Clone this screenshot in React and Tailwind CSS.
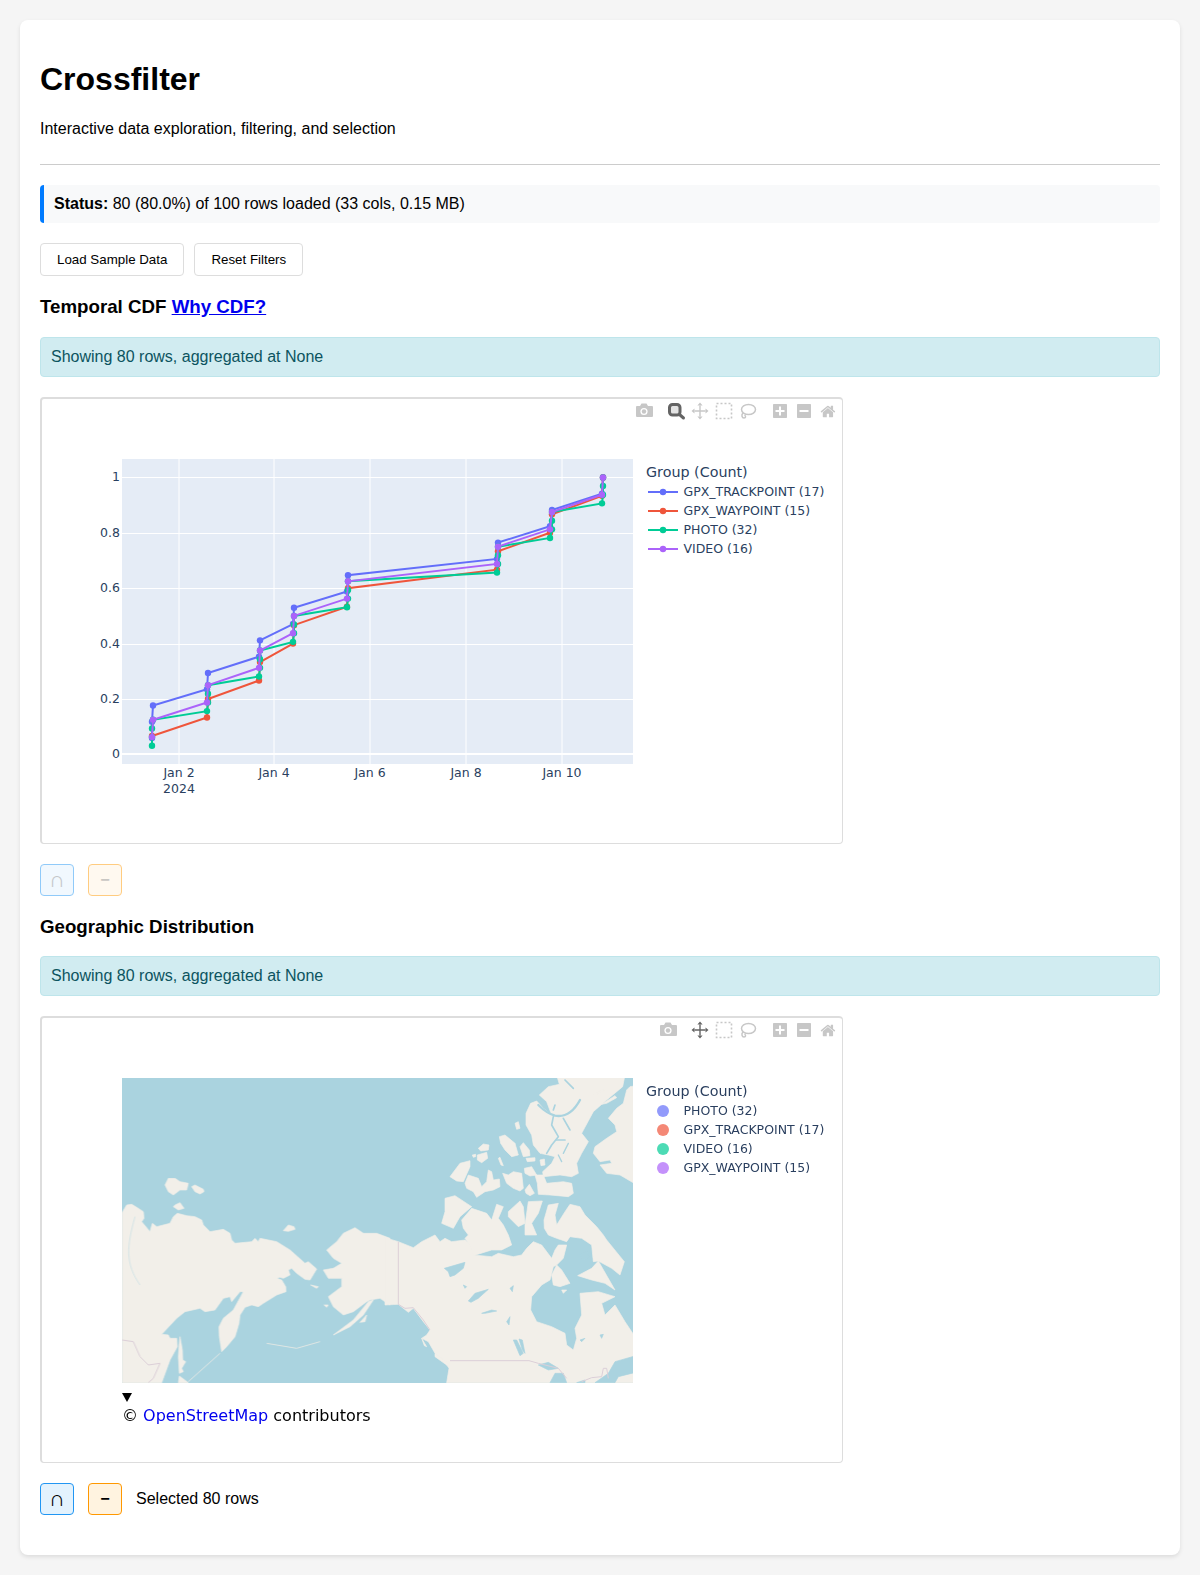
import React from 'react';

// x position of each burst of points, low end and high end of the jump
const BURSTS = [[152, 153], [207, 208], [259, 260], [293, 294], [347, 348], [497, 498], [550, 552], [602, 603]];
const yOf = (v) => 754.4 - 277 * v;

// [total rows, rows at the low end of the burst, rows at the high end]
function cdf(total, groups) {
  const pts = [];
  let k = 0;
  groups.forEach(([a, b], i) => {
    for (let n = 0; n < a; n++) { k++; pts.push([BURSTS[i][0], yOf(k / total)]); }
    for (let n = 0; n < b; n++) { k++; pts.push([BURSTS[i][1], yOf(k / total)]); }
  });
  return pts;
}

const SERIES = [
  { name: 'GPX_TRACKPOINT (17)', color: '#636efa', pts: cdf(17, [[2, 1], [1, 1], [1, 1], [1, 1], [1, 1], [1, 1], [1, 1], [1, 1]]) },
  { name: 'GPX_WAYPOINT (15)', color: '#ef553b', pts: cdf(15, [[1, 0], [1, 1], [1, 1], [1, 1], [1, 1], [1, 1], [1, 1], [1, 1]]) },
  { name: 'PHOTO (32)', color: '#00cc96', pts: cdf(32, [[3, 1], [1, 3], [1, 3], [1, 3], [1, 3], [1, 3], [1, 3], [1, 3]]) },
  { name: 'VIDEO (16)', color: '#ab63fa', pts: cdf(16, [[1, 1], [1, 1], [1, 1], [1, 1], [1, 1], [1, 1], [1, 1], [1, 1]]) },
];

const GEO_LEGEND = [
  ['PHOTO (32)', '#929afb'],
  ['GPX_TRACKPOINT (17)', '#f48876'],
  ['VIDEO (16)', '#4ddbb5'],
  ['GPX_WAYPOINT (15)', '#c491fb'],
];

const PLOT_FONT = { fontFamily: '"DejaVu Sans", sans-serif' };
const TICK = '#2a3f5f';
const LAND = '#f2efe9';
const WATER = '#aad3df';

function Modebar({ active, cameraX }) {
  const off = '#c7c7c7';
  const on = '#646464';
  return (
    <g>
      <g transform={`translate(${cameraX},0)`}>
        <path d="M-8 -5h4l1.5-2.5h5l1.5 2.5h4a1 1 0 0 1 1 1v9a1 1 0 0 1-1 1h-15a1 1 0 0 1-1-1v-9a1 1 0 0 1 1-1z" fill={off} />
        <circle cx="0" cy="0.5" r="3.6" fill="#fff" />
        <circle cx="0" cy="0.5" r="2.2" fill={off} />
      </g>
      {active === 'zoom' && (
        <g transform="translate(676,0)">
          <rect x="-6.5" y="-6.5" width="10.5" height="10.5" rx="3" fill="#e4e4e4" stroke={on} strokeWidth="3" />
          <path d="M3.5 3.5l4 3.5" stroke={on} strokeWidth="3" strokeLinecap="round" />
        </g>
      )}
      <g transform="translate(700,0)" fill={active === 'pan' ? on : off}>
        <path d="M-0.7 -5.5h1.4v11h-1.4zM-5.5 -0.7h11v1.4h-11z" />
        <path d="M0 -8.5l2.6 3h-5.2zM0 8.5l2.6-3h-5.2zM-8.5 0l3-2.6v5.2zM8.5 0l-3-2.6v5.2z" />
      </g>
      <rect x="716.5" y="-7.5" width="15" height="15" fill="none" stroke={off} strokeWidth="1.6" strokeDasharray="2 2" />
      <g transform="translate(748,0)" fill="none" stroke={off} strokeWidth="1.5">
        <ellipse cx="0.5" cy="-1.5" rx="7" ry="5" />
        <path d="M-5 2c-2 2 -1 5 1 5s2-2 0.5-3" />
      </g>
      <g transform="translate(780,0)">
        <rect x="-7" y="-7" width="14" height="14" rx="0.8" fill={off} />
        <path d="M-4.5 -1h3.5v-3.5h2v3.5h3.5v2h-3.5v3.5h-2v-3.5h-3.5z" fill="#fff" />
      </g>
      <g transform="translate(804,0)">
        <rect x="-7" y="-7" width="14" height="14" rx="0.8" fill={off} />
        <rect x="-4.5" y="-1" width="9" height="2" fill="#fff" />
      </g>
      <path
        transform="translate(820.5,-7.5) scale(0.016,-0.016) translate(0,-850)"
        d="m786 296v-267q0-15-11-26t-25-10h-214v214h-143v-214h-214q-15 0-25 10t-11 26v267q0 1 0 2t0 2l321 264 321-264q1-1 1-4z m124 39l-34-41q-5-5-12-6h-2q-7 0-12 3l-386 322-386-322q-7-4-13-4-7 2-12 7l-35 41q-4 5-3 13t6 12l401 334q18 15 42 15t43-15l136-114v109q0 8 5 13t13 5h107q8 0 13-5t5-13v-227l122-102q5-5 6-12t-4-13z"
        fill={off}
      />
    </g>
  );
}

function CdfChart() {
  const yTicks = [[1, '1'], [0.8, '0.8'], [0.6, '0.6'], [0.4, '0.4'], [0.2, '0.2']];
  const xTicks = [[179, 'Jan 2'], [274, 'Jan 4'], [370, 'Jan 6'], [466, 'Jan 8'], [562, 'Jan 10']];
  return (
    <svg width="800" height="444" viewBox="42 399 800 444" className="block" style={PLOT_FONT}>
      <g transform="translate(0,411)">
        <Modebar active="zoom" cameraX={644} />
      </g>
      <rect x="122" y="459" width="511" height="305" fill="#e5ecf6" />
      {xTicks.map(([x]) => <line key={x} x1={x} x2={x} y1="459" y2="764" stroke="#fff" />)}
      {yTicks.map(([v]) => <line key={v} x1="122" x2="633" y1={Math.round(yOf(v)) + 0.5} y2={Math.round(yOf(v)) + 0.5} stroke="#fff" />)}
      <line x1="122" x2="633" y1="754" y2="754" stroke="#fff" strokeWidth="2" />
      {SERIES.map((s) => (
        <g key={s.name}>
          <polyline points={s.pts.map((p) => p.join(',')).join(' ')} fill="none" stroke={s.color} strokeWidth="2" />
          {s.pts.map((p, i) => <circle key={i} cx={p[0]} cy={p[1]} r="3.2" fill={s.color} />)}
        </g>
      ))}
      {yTicks.map(([v, t]) => <text key={t} x="120" y={yOf(v) + 4} textAnchor="end" fontSize="12.5" fill={TICK}>{t}</text>)}
      <text x="120" y="758" textAnchor="end" fontSize="12.5" fill={TICK}>0</text>
      {xTicks.map(([x, t]) => <text key={t} x={x} y="777" textAnchor="middle" fontSize="12.5" fill={TICK}>{t}</text>)}
      <text x="179" y="793" textAnchor="middle" fontSize="12.5" fill={TICK}>2024</text>
      <text x="646" y="477" fontSize="14.3" fill={TICK}>Group (Count)</text>
      {SERIES.map((s, i) => (
        <g key={s.name} transform={`translate(0,${492 + i * 19})`}>
          <line x1="648" x2="678" stroke={s.color} strokeWidth="2" />
          <circle cx="663" r="3.2" fill={s.color} />
          <text x="683.5" y="4" fontSize="12.5" fill={TICK}>{s.name}</text>
        </g>
      ))}
    </svg>
  );
}

// basemap outlines, traced at 3x from three parts of the map
const SIBERIA_ALASKA = [
  '6,428 20,405 35,403 50,412 70,425 72,445 65,455 90,485 97,460 110,470 150,460 160,440 172,430 200,437 225,440 245,450 250,465 270,485 310,478 330,490 335,510 345,520 395,515 405,505 415,515 420,505 470,515 510,540 555,580 565,575 590,597 570,630 555,628 530,610 515,595 505,600 510,615 490,625 480,622 470,625 485,630 497,650 498,665 470,675 430,700 415,710 395,705 375,712 360,735 357,760 345,800 320,830 305,845 298,800 297,770 310,745 340,720 370,665 360,665 335,695 330,680 310,685 285,720 255,725 240,715 195,725 170,745 125,793 145,795 150,805 170,805 172,830 150,870 125,938 6,938',
  '180,800 187,840 188,870 197,875 185,895 190,905 178,910 175,860 178,820',
  '175,938 178,918 205,938',
  '490,482 505,465 522,470 525,478 505,484',
  '135,345 145,325 165,325 180,335 205,340 200,360 180,360 160,375 145,365',
  '215,350 225,345 250,358 252,365 240,372 225,365',
  '165,405 180,398 192,415 175,420 160,410',
  '810,505 770,490 730,490 705,473 670,490 650,515 620,540 640,565 665,580 640,595 610,600 625,625 665,625 665,650 625,680 640,710 670,735 700,725 740,695 750,690 780,685 810,705',
  '745,695 760,690 730,735 690,770 640,795 700,750',
  '720,757 740,735 735,755',
  '572,645 595,650 590,655',
  '612,705 625,705 620,712',
];

const ARCTIC = [
  '350,0 555,0 548,35 500,75 460,110 425,175 445,200 425,235 410,265 415,295 395,305 360,300 310,305 308,290 335,265 345,245 325,240 300,235 280,210 275,180 258,150 258,115 272,85 290,78 310,100 335,120 320,80 298,60 325,35 358,28',
  '600,30 570,35 560,45 550,85 530,100 505,130 525,150 530,170 500,190 465,215 460,235 480,260 510,255 515,265 480,270 500,295 540,300 600,335',
  '460,58 490,42 492,47 465,60',
  '485,88 525,62 530,68 500,85',
  '225,145 235,140 240,160 230,163',
  '178,185 195,180 225,205 235,240 215,245 195,225 182,205',
  '240,215 250,203 268,225 270,242 250,245',
  '115,220 130,207 147,210 145,225 122,228',
  '97,240 107,238 107,245 100,247',
  '112,240 140,232 143,250 125,263 112,255',
  '175,250 180,247 190,272 183,270',
  '258,250 285,248 285,258 262,260',
  '300,255 313,252 315,270 303,272',
  '30,305 60,265 90,257 90,275 70,320 50,318',
  '75,325 85,300 115,310 125,335 140,320 145,285 155,290 160,315 178,312 180,335 160,345 135,350 110,367 100,350 80,340',
  '188,295 205,300 220,290 245,295 250,340 240,348 220,340 200,325',
  '253,280 275,275 290,300 270,303 255,295',
  '255,345 268,328 283,355 270,362 258,355',
  '285,300 310,300 320,325 370,320 395,325 400,355 385,365 330,360 295,358 292,325',
  '15,370 45,362 95,395 60,425 40,460 5,445 15,410',
  '205,410 240,378 250,395 255,445 235,455 205,425',
  '265,380 307,378 295,415 275,445 290,480 255,480 255,450',
];

const CANADA = [
  '0,38 40,50 85,68 110,50 150,30 165,50 180,40 200,50 240,45 270,70 265,90 320,95 340,85 385,95 410,90 425,70 445,50 470,60 500,100 510,75 520,60 545,60 535,100 515,120 505,125 495,165 470,180 440,215 437,255 455,290 500,305 540,325 545,360 565,375 575,340 570,310 590,270 585,205 640,200 690,215 650,235 660,270 690,240 720,290 760,350 760,473 185,473 192,430 175,405 150,385 130,350 110,340 125,330 135,315 115,290 85,250 70,262 40,238 0,240',
  '230,-15 260,-50 305,-35 320,-15 335,-62 355,-55 340,-20 355,0 370,30 380,60 350,75 320,75 265,92 260,70 240,40 250,30 235,10',
  '477,-15 490,-60 520,-65 510,-30 515,0 540,-40 555,-62 585,-55 600,-30 635,5 655,30 665,45 718,110 705,150 680,130 640,108 625,110 620,60 590,40 555,35 545,50 515,40 490,30 478,10',
  '578,152 620,130 640,108 690,195 660,175 620,165',
  '500,150 515,120 530,135 555,175 525,185 505,180',
  '530,195 545,195 535,205',
  '150,385 190,415 185,420 150,395',
  '110,340 125,365 118,362',
];

const CANADA_WATER = [
  '585,90 605,80 612,95 595,105',
  '178,130 240,112 235,130 210,150 195,155 190,140',
  '250,228 270,205 310,193 280,220 258,232',
  '290,265 320,255 335,258 300,265',
  '385,345 395,345 415,385 405,392',
  '402,342 412,345 420,385 412,375',
  '365,290 375,275 372,300',
  '460,420 490,412 520,430 490,435',
  '495,473 510,445 535,445 545,473',
  '630,473 670,445 690,410 760,390 760,440 700,455 690,473',
  '575,473 600,465 600,473',
  '585,345 600,340 590,350',
  '645,330 655,328 650,340',
  '375,190 385,182 382,200',
  '235,180 245,185 240,190',
];

function Basemap() {
  return (
    <svg x="122" y="1078" width="511" height="305" viewBox="122 1078 511 305">
      <rect x="122" y="1078" width="511" height="305" fill={WATER} />
      <g className="blur-[0.6px]">
        <g transform="translate(120,1070) scale(0.33333)" fill={LAND} stroke={LAND} strokeWidth="2" strokeLinejoin="round">
          {SIBERIA_ALASKA.map((p) => <polygon key={p} points={p} />)}
          <path d="M205 935L300 850M440 820L530 835L600 815" stroke="#dfe6e4" strokeWidth="3" fill="none" />
          <path d="M6 810L40 815L60 860L85 885L120 880L100 925L85 938" stroke="#dccfd8" strokeWidth="3" fill="none" />
          <path d="M45 440C20 530 15 580 60 645" stroke="#c6e0e6" strokeWidth="2" fill="none" />
        </g>
        <g transform="translate(440,1075) scale(0.33333)" fill={LAND} stroke={LAND} strokeWidth="2" strokeLinejoin="round">
          {ARCTIC.map((p) => <polygon key={p} points={p} />)}
          <g fill="none" stroke={WATER} strokeLinecap="round" strokeLinejoin="round">
            <path strokeWidth="7" d="M295 90Q320 115 345 122Q390 130 420 75" />
            <path strokeWidth="5" d="M340 125L335 150L355 185L335 210L320 235" />
            <path strokeWidth="5" d="M370 130L390 165M375 195L350 195M345 90L340 105M375 15L400 40" />
            <path strokeWidth="4" d="M370 235L385 205M355 240L365 260" />
          </g>
        </g>
        <g transform="translate(385,1225) scale(0.33333)" fill={LAND} stroke={LAND} strokeWidth="2" strokeLinejoin="round">
          {CANADA.map((p) => <polygon key={p} points={p} />)}
          <g fill={WATER} stroke={WATER}>
            {CANADA_WATER.map((p) => <polygon key={p} points={p} />)}
          </g>
          <path d="M40 50V238L60 250L85 248L115 285L135 315M195 407H432L460 415L520 430L545 460M590 470L620 458L650 455L655 430L665 430L670 460" stroke="#dccfd8" strokeWidth="3" fill="none" />
        </g>
      </g>
    </svg>
  );
}

function GeoChart() {
  return (
    <svg width="800" height="444" viewBox="42 1018 800 444" className="block" style={PLOT_FONT}>
      <g transform="translate(0,1030)">
        <Modebar active="pan" cameraX={668} />
      </g>
      <Basemap />
      <path d="M122 1393h10l-5 9z" fill="#000" />
      <text x="122" y="1421" fontSize="16" fill="#000">© <tspan fill="#0000ee">OpenStreetMap</tspan> contributors</text>
      <text x="646" y="1096" fontSize="14.3" fill={TICK}>Group (Count)</text>
      {GEO_LEGEND.map(([name, color], i) => (
        <g key={name} transform={`translate(0,${1111 + i * 19})`}>
          <circle cx="663" r="6" fill={color} />
          <text x="683.5" y="4" fontSize="12.5" fill={TICK}>{name}</text>
        </g>
      ))}
    </svg>
  );
}

function PlotFrame({ children }) {
  return (
    <div className="w-[803px] border-2 border-r border-b border-[#dddddd] rounded-[4px] overflow-hidden">
      {children}
    </div>
  );
}

function SetButtons({ disabled, note }) {
  return (
    <div className="flex items-center">
      <button className={`w-[34px] h-8 rounded-[4px] border text-[22px] leading-none ${disabled ? 'border-[#90caf9] bg-[#f1f8fe] text-[#c4c7ca]' : 'border-[#2196f3] bg-[#e3f2fd] text-black'}`}>∩</button>
      <button className={`w-[34px] h-8 ml-[14px] rounded-[4px] border text-[16px] font-bold leading-none ${disabled ? 'border-[#ffcc80] bg-[#fff9f0] text-[#c9c7c3]' : 'border-[#ff9800] bg-[#fff3e0] text-black'}`}>−</button>
      {note && <span className="ml-[14px] text-[16px]">{note}</span>}
    </div>
  );
}

function Notice() {
  return (
    <div className="px-2.5 py-2.5 text-[16px] text-[#0c5460] bg-[#d1ecf1] border border-[#bee5eb] rounded-[4px]">
      Showing 80 rows, aggregated at None
    </div>
  );
}

export default function App() {
  return (
    <div className="min-h-[1575px] bg-[#f5f5f5] p-5 text-black leading-[normal] font-['Liberation_Sans',Arial,sans-serif]">
      <div className="bg-white rounded-lg shadow-[0_2px_4px_rgba(0,0,0,0.1)] p-5 h-[1535px]">
        <h1 className="mt-[21px] text-[32px] font-bold leading-[37px]">Crossfilter</h1>
        <p className="mt-[22px] text-[16px]">Interactive data exploration, filtering, and selection</p>
        <hr className="mt-[26px] border-0 border-t border-[#cccccc]" />

        <div className="mt-5 px-2.5 py-2.5 text-[16px] bg-[#f8f9fa] border-l-4 border-[#007bff] rounded-[4px]">
          <strong>Status:</strong> 80 (80.0%) of 100 rows loaded (33 cols, 0.15 MB)
        </div>

        <div className="mt-5 flex gap-2.5">
          <button className="h-[33px] px-4 text-[13.33px] bg-white border border-[#dddddd] rounded-[4px]">Load Sample Data</button>
          <button className="h-[33px] px-4 text-[13.33px] bg-white border border-[#dddddd] rounded-[4px]">Reset Filters</button>
        </div>

        <h3 className="mt-5 text-[18.72px] font-bold">
          Temporal CDF <a href="#" className="text-[#0000ee] underline">Why CDF?</a>
        </h3>
        <div className="mt-[19px]"><Notice /></div>
        <div className="mt-5"><PlotFrame><CdfChart /></PlotFrame></div>
        <div className="mt-5"><SetButtons disabled /></div>

        <h3 className="mt-5 text-[18.72px] font-bold">Geographic Distribution</h3>
        <div className="mt-[18px]"><Notice /></div>
        <div className="mt-5"><PlotFrame><GeoChart /></PlotFrame></div>
        <div className="mt-5"><SetButtons note="Selected 80 rows" /></div>
      </div>
    </div>
  );
}
